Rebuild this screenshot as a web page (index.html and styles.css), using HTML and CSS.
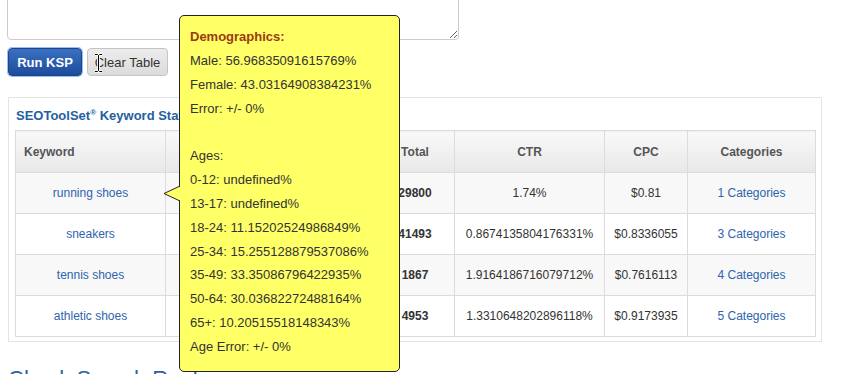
FILE: index.html
```html
<!DOCTYPE html>
<html lang="en">
<head>
  <meta charset="UTF-8" />
  <title>Keyword Strategy Planner</title>
  <meta name="viewport" content="width=device-width, initial-scale=1.0" />
  <link rel="stylesheet" href="styles.css">
</head>
<body>

  <!-- keyword input -->
  <div class="page">
    <textarea class="kw-input"></textarea>

    <div class="actions">
      <button class="btn btn-primary">Run KSP</button>
      <button class="btn btn-default">Clear Table</button>
    </div>

    <!-- results -->
    <div class="stats-panel">
      <div class="panel-title">SEOToolSet<sup>&reg;</sup> Keyword Statistics</div>
      <table class="stats-table">
        <colgroup>
          <col style="width:150px">
          <col style="width:210px">
          <col style="width:79px">
          <col style="width:150px">
          <col style="width:83px">
          <col style="width:128px">
        </colgroup>
        <thead>
          <tr>
            <th class="col-keyword">Keyword</th>
            <th></th>
            <th>Total</th>
            <th>CTR</th>
            <th>CPC</th>
            <th>Categories</th>
          </tr>
        </thead>
        <tbody>
          <tr>
            <td><a href="#">running shoes</a></td>
            <td></td>
            <td class="strong">29800</td>
            <td>1.74%</td>
            <td>$0.81</td>
            <td><a href="#">1 Categories</a></td>
          </tr>
          <tr>
            <td><a href="#">sneakers</a></td>
            <td></td>
            <td class="strong">41493</td>
            <td>0.8674135804176331%</td>
            <td>$0.8336055</td>
            <td><a href="#">3 Categories</a></td>
          </tr>
          <tr>
            <td><a href="#">tennis shoes</a></td>
            <td></td>
            <td class="strong">1867</td>
            <td>1.9164186716079712%</td>
            <td>$0.7616113</td>
            <td><a href="#">4 Categories</a></td>
          </tr>
          <tr>
            <td><a href="#">athletic shoes</a></td>
            <td></td>
            <td class="strong">4953</td>
            <td>1.3310648202896118%</td>
            <td>$0.9173935</td>
            <td><a href="#">5 Categories</a></td>
          </tr>
        </tbody>
      </table>
    </div>

    <h2 class="section-title">Check Search Rankings</h2>
  </div>

  <!-- demographics tooltip for "running shoes" -->
  <div class="demo-tip">
    <svg class="tip-arrow" width="18" height="18" viewBox="0 0 18 18">
      <polygon points="18,1 1,8.5 18,16" fill="#ffff66" />
      <polyline points="17,1 1,8.5 17,16" fill="none" stroke="#222" stroke-width="1" />
    </svg>
    <div class="tip-head">Demographics:</div>
    <div>Male: 56.96835091615769%</div>
    <div>Female: 43.03164908384231%</div>
    <div>Error: +/- 0%</div>
    <div>&nbsp;</div>
    <div>Ages:</div>
    <div>0-12: undefined%</div>
    <div>13-17: undefined%</div>
    <div>18-24: 11.15202524986849%</div>
    <div>25-34: 15.255128879537086%</div>
    <div>35-49: 33.35086796422935%</div>
    <div>50-64: 30.03682272488164%</div>
    <div>65+: 10.20515518148343%</div>
    <div>Age Error: +/- 0%</div>
  </div>

  <!-- mouse cursor over the Clear Table button -->
  <svg class="text-cursor" width="9" height="20" viewBox="0 0 9 20">
    <path d="M1 1.5h2.5l1 1 1-1H8M1 18.5h2.5l1-1 1 1H8M4.5 2.5v15" fill="none" stroke="#fff" stroke-width="2.6" />
    <path d="M1 1.5h2.5l1 1 1-1H8M1 18.5h2.5l1-1 1 1H8M4.5 2.5v15" fill="none" stroke="#000" stroke-width="1" />
  </svg>

</body>
</html>
```

FILE: styles.css
```css
html {
  overflow: hidden;
}

body {
  margin: 0;
  font-family: "Liberation Sans", Arial, sans-serif;
  font-size: 13px;
  color: #333;
  background-color: #fff;
}

.page {
  padding: 0 8px;
  width: 814px;
}

.kw-input {
  display: block;
  width: 452px;
  height: 80px;
  margin: -40px 0 0 -1px;
  border: 1px solid #ccc;
  border-radius: 4px;
  box-shadow: inset 0 1px 1px rgba(0, 0, 0, 0.05);
  box-sizing: border-box;
  background-color: #fff;
}

.actions {
  margin-top: 8px;
  display: flex;
  gap: 5px;
}

.btn {
  height: 28px;
  padding: 0;
  font-family: "Liberation Sans", Arial, sans-serif;
  font-size: 13px;
  white-space: nowrap;
  border-radius: 4px;
  border: 1px solid #c4c4c4;
  cursor: pointer;
}

.btn-primary {
  width: 74px;
  color: #fff;
  font-weight: bold;
  background: linear-gradient(#3b70c2, #1d4c9b);
  border-color: #1a4690;
  box-shadow: 0 0 0 1px #9cc0ec;
}

.btn-default {
  width: 81px;
  color: #333;
  background: linear-gradient(#ececec, #dcdcdc);
}

.stats-panel {
  margin-top: 21px;
  border: 1px solid #e4e4e4;
  padding: 9px 6px 4px 6px;
  background-color: #fff;
}

.panel-title {
  font-size: 13px;
  font-weight: bold;
  color: #24609e;
  line-height: 18px;
  padding-left: 1px;
  margin-bottom: 5px;
}

.panel-title sup {
  font-size: 8px;
  vertical-align: 5px;
  line-height: 0;
}

.stats-table {
  width: 800px;
  border-collapse: collapse;
  table-layout: fixed;
  font-size: 12px;
}

.stats-table th,
.stats-table td {
  border: 1px solid #dcdcdc;
  text-align: center;
  padding: 0 8px;
  white-space: nowrap;
  overflow: hidden;
}

.stats-table th {
  height: 41px;
  color: #555;
  font-weight: bold;
  background: linear-gradient(#f9f9f9, #e8e8e8);
}

.stats-table th.col-keyword {
  text-align: left;
}

.stats-table td {
  height: 40px;
}

.stats-table tbody tr:nth-child(odd) td {
  background-color: #f8f8f8;
}

.stats-table td.strong {
  font-weight: bold;
}

.stats-table a {
  color: #2d64ad;
  text-decoration: none;
}

.section-title {
  margin: 24px 0 0;
  font-size: 22px;
  font-weight: normal;
  line-height: 26px;
  color: #2b63a6;
}

/* tooltip */
.demo-tip {
  position: absolute;
  top: 15px;
  left: 179px;
  width: 221px;
  box-sizing: border-box;
  padding: 9px 10px 12px 10px;
  background-color: #ffff66;
  border: 1px solid #222;
  border-radius: 5px;
  font-size: 13px;
  line-height: 23.85px;
  color: #333;
  z-index: 10;
}

.tip-head {
  font-weight: bold;
  color: #9c3a12;
}

.tip-arrow {
  position: absolute;
  left: -17px;
  top: 169px;
}

.text-cursor {
  position: absolute;
  left: 94px;
  top: 53px;
  z-index: 20;
}
```
